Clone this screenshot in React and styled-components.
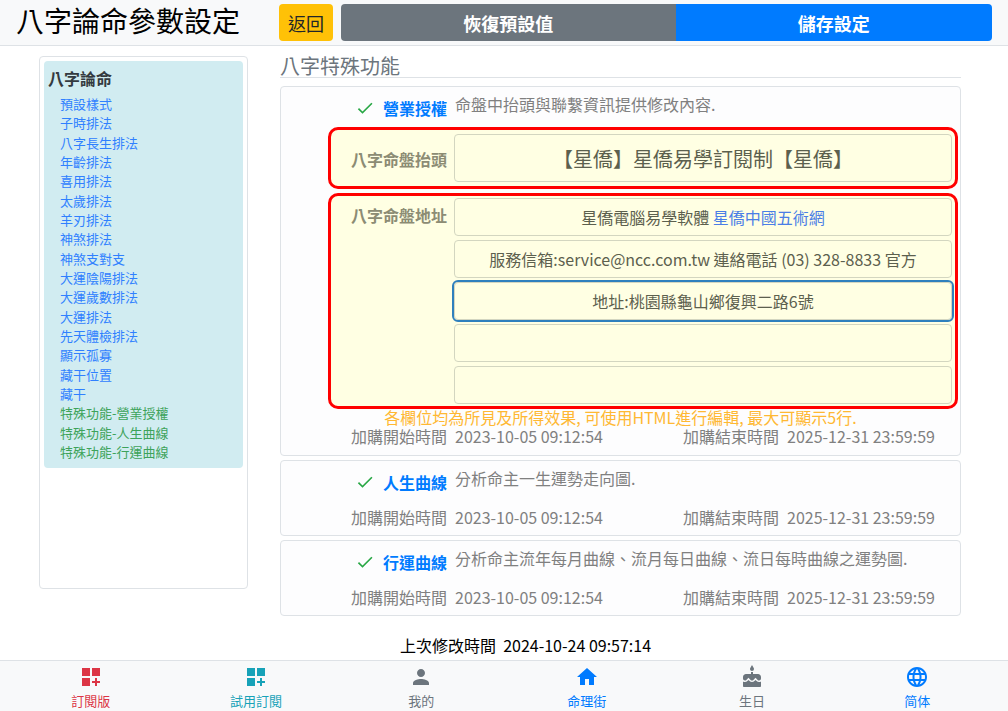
import styled, { createGlobalStyle } from "styled-components";
import {
  MdCake,
  MdCheck,
  MdDashboardCustomize,
  MdHome,
  MdLanguage,
  MdPerson,
} from "react-icons/md";

const menu = [
  "預設樣式", "子時排法", "八字長生排法", "年齡排法", "喜用排法", "太歲排法", "羊刃排法", "神煞排法",
  "神煞支對支", "大運陰陽排法", "大運歲數排法", "大運排法", "先天體檢排法", "顯示孤寡", "藏干位置", "藏干",
  "特殊功能-營業授權", "特殊功能-人生曲線", "特殊功能-行運曲線",
];

const tabs = [
  { label: "訂閱版", color: "#dc3545", icon: MdDashboardCustomize },
  { label: "試用訂閱", color: "#17a2b8", icon: MdDashboardCustomize },
  { label: "我的", color: "#6c757d", icon: MdPerson },
  { label: "命理街", color: "#007bff", icon: MdHome },
  { label: "生日", color: "#6c757d", icon: MdCake },
  { label: "简体", color: "#007bff", icon: MdLanguage },
];

const GlobalStyle = createGlobalStyle`
  * {
    box-sizing: border-box;
  }
  body {
    margin: 0;
    background: #fff;
    color: #000;
    font-family: "Noto Sans CJK TC", "Noto Sans", sans-serif;
    font-size: 16px;
    line-height: 24px;
  }
  a {
    text-decoration: none;
    color: #007bff;
  }
  button, input {
    font-family: inherit;
  }
`;

const Page = styled.div`
  display: flex;
  flex-direction: column;
  min-height: 100vh;
`;

const Header = styled.header`
  display: flex;
  align-items: flex-start;
  gap: 8px;
  padding: 4px 16px;
  background: #f8f9fa;
  border-bottom: 1px solid #dee2e6;
`;

const Title = styled.h1`
  flex: 0 0 255px;
  margin: 0;
  font-size: 28px;
  font-weight: 400;
  line-height: 32px;
`;

const Button = styled.button`
  flex: ${(props) => (props.$grow ? "1 1 auto" : "0 0 auto")};
  height: 37px;
  padding: 0 9px;
  border: 0;
  border-radius: ${(props) => props.$radius || "4px"};
  background: ${(props) => props.$bg};
  color: ${(props) => props.$color || "#fff"};
  font-size: 18px;
  font-weight: ${(props) => (props.$grow ? 700 : 400)};
  cursor: pointer;
`;

const ButtonGroup = styled.div`
  display: flex;
  flex: 1;
`;

const Body = styled.div`
  display: flex;
  flex: 1;
  align-items: flex-start;
  gap: 32px;
  padding: 8px 47px 0 39px;
`;

const Sidebar = styled.aside`
  flex: 0 0 209px;
  height: calc(100vh - 178px);
  margin-top: 2px;
  padding: 4px;
  overflow: auto;
  border: 1px solid #dee2e6;
  border-radius: 4px;
`;

const MenuPanel = styled.nav`
  display: flex;
  flex-direction: column;
  height: 407px;
  padding: 5px 4px 7px;
  border-radius: 4px;
  background: #d1ecf1;
`;

const MenuTitle = styled.strong`
  margin-bottom: 4px;
  color: #343a40;
`;

const MenuList = styled.ul`
  display: flex;
  flex: 1;
  flex-direction: column;
  justify-content: space-between;
  margin: 0;
  padding: 0 12px;
  list-style: none;
  font-size: 13px;
  line-height: 19px;
`;

const MenuLink = styled.a`
  color: ${(props) => (props.$special ? "#3da35a" : "#2f80ff")};
`;

const Main = styled.main`
  display: flex;
  flex: 1;
  flex-direction: column;
  gap: 4px;
  min-width: 0;
`;

const Heading = styled.h2`
  margin: 0 0 4px;
  border-bottom: 1px solid #dee2e6;
  color: #6c757d;
  font-size: 20px;
  font-weight: 400;
  line-height: 23px;
`;

const Card = styled.section`
  display: flex;
  flex-direction: column;
  padding-bottom: 6px;
  border: 1px solid #dee2e6;
  border-radius: 4px;
  background: #fdfdfe;
  color: #808080;
`;

const Feature = styled.div`
  display: grid;
  grid-template-columns: 166px 1fr;
  column-gap: 8px;
  height: 40px;
  padding-top: 5px;
`;

const FeatureName = styled.strong`
  display: flex;
  align-items: center;
  justify-content: flex-end;
  gap: 8px;
  height: 32px;
  color: #007bff;

  svg {
    color: #28a745;
  }
`;

const Highlight = styled.div`
  display: grid;
  grid-template-columns: 116px 1fr;
  column-gap: 7px;
  margin: 0 2px ${(props) => (props.$last ? 0 : 4)}px 47px;
  padding: ${(props) => (props.$last ? 2 : 4)}px 3px ${(props) => (props.$last ? 2 : 4)}px 0;
  border: 3px solid #f00;
  border-radius: 10px;
  background: #ffffe3;
`;

const FieldLabel = styled.label`
  padding-top: ${(props) => (props.$tall ? 13 : 5)}px;
  color: #8c8c74;
  font-weight: 700;
  text-align: right;
`;

const FieldStack = styled.div`
  display: grid;
  gap: 4px;
`;

const fieldStyle = (props) => `
  width: 100%;
  min-width: 0;
  height: ${props.$tall ? 48 : 38}px;
  padding: 6px 12px;
  border: 1px solid #d3d6c0;
  border-radius: 4px;
  outline: ${props.$active ? "2px solid #2f80bd" : "none"};
  background: transparent;
  color: #5c604e;
  font-size: ${props.$tall ? 20 : 16}px;
  line-height: 24px;
  text-align: center;
`;

const Field = styled.input`
  ${fieldStyle}
`;

const RichField = styled.div`
  ${fieldStyle}

  a {
    color: #4a7ee6;
  }
`;

const Hint = styled.p`
  margin: 0;
  color: #ffb833;
  line-height: 16px;
  text-align: center;
`;

const Dates = styled.dl`
  display: grid;
  grid-template-columns: repeat(4, 1fr);
  margin: ${(props) => (props.$tight ? 2 : 4)}px 15px 0 0;
  padding-bottom: ${(props) => (props.$tight ? 3 : 0)}px;
  line-height: ${(props) => (props.$tight ? 19 : 24)}px;
  white-space: nowrap;

  dt {
    text-align: right;
  }
  dd {
    margin: 0;
    padding-left: 8px;
  }
`;

const Modified = styled.p`
  margin: 13px 0 3px 120px;
`;

const TabBar = styled.nav`
  display: grid;
  grid-template-columns: repeat(6, 1fr);
  height: 51px;
  padding: 4px 8px 0;
  border-top: 1px solid #dee2e6;
  background: #f8f9fa;
`;

const Tab = styled.a`
  display: flex;
  flex-direction: column;
  align-items: center;
  gap: 2px;
  color: ${(props) => props.$color};
  font-size: 13px;
  line-height: 19px;
`;

const Period = ({ tight }) => (
  <Dates $tight={tight}>
    <dt>加購開始時間</dt>
    <dd>2023-10-05 09:12:54</dd>
    <dt>加購結束時間</dt>
    <dd>2025-12-31 23:59:59</dd>
  </Dates>
);

const FeatureRow = ({ name, children }) => (
  <Feature>
    <FeatureName>
      <MdCheck size={20} />
      {name}
    </FeatureName>
    <span>{children}</span>
  </Feature>
);

const App = () => {
  return (
    <Page>
      <GlobalStyle />
      <Header>
        <Title>八字論命參數設定</Title>
        <Button type="button" $bg="#ffc107" $color="#212529">返回</Button>
        <ButtonGroup>
          <Button type="button" $grow $bg="#6c757d" $radius="4px 0 0 4px">恢復預設值</Button>
          <Button type="button" $grow $bg="#007bff" $radius="0 4px 4px 0">儲存設定</Button>
        </ButtonGroup>
      </Header>

      <Body>
        <Sidebar>
          <MenuPanel>
            <MenuTitle>八字論命</MenuTitle>
            <MenuList>
              {menu.map((item) => (
                <li key={item}>
                  <MenuLink href="#" $special={item.startsWith("特殊功能")}>{item}</MenuLink>
                </li>
              ))}
            </MenuList>
          </MenuPanel>
        </Sidebar>

        <Main>
          <Heading>八字特殊功能</Heading>

          <Card>
            <FeatureRow name="營業授權">命盤中抬頭與聯繫資訊提供修改內容.</FeatureRow>
            <Highlight>
              <FieldLabel $tall htmlFor="chart-title">八字命盤抬頭</FieldLabel>
              <Field $tall id="chart-title" defaultValue="【星僑】星僑易學訂閱制【星僑】" />
            </Highlight>
            <Highlight $last>
              <FieldLabel as="span" id="address-label">八字命盤地址</FieldLabel>
              <FieldStack role="group" aria-labelledby="address-label">
                <RichField
                  role="textbox"
                  aria-labelledby="address-label"
                  contentEditable
                  suppressContentEditableWarning
                >
                  星僑電腦易學軟體 <a href="#">星僑中國五術網</a>
                </RichField>
                <Field
                  aria-labelledby="address-label"
                  defaultValue="服務信箱:service@ncc.com.tw 連絡電話 (03) 328-8833 官方"
                />
                <Field $active aria-labelledby="address-label" defaultValue="地址:桃園縣龜山鄉復興二路6號" />
                <Field aria-labelledby="address-label" />
                <Field aria-labelledby="address-label" />
              </FieldStack>
            </Highlight>
            <Hint>各欄位均為所見及所得效果, 可使用HTML進行編輯, 最大可顯示5行.</Hint>
            <Period tight />
          </Card>

          <Card>
            <FeatureRow name="人生曲線">分析命主一生運勢走向圖.</FeatureRow>
            <Period />
          </Card>

          <Card>
            <FeatureRow name="行運曲線">分析命主流年每月曲線、流月每日曲線、流日每時曲線之運勢圖.</FeatureRow>
            <Period />
          </Card>

          <Modified>上次修改時間&nbsp; 2024-10-24 09:57:14</Modified>
        </Main>
      </Body>

      <TabBar>
        {tabs.map(({ label, color, icon: Icon }) => (
          <Tab key={label} href="#" $color={color}>
            <Icon size={24} />
            {label}
          </Tab>
        ))}
      </TabBar>
    </Page>
  );
};

export default App;
